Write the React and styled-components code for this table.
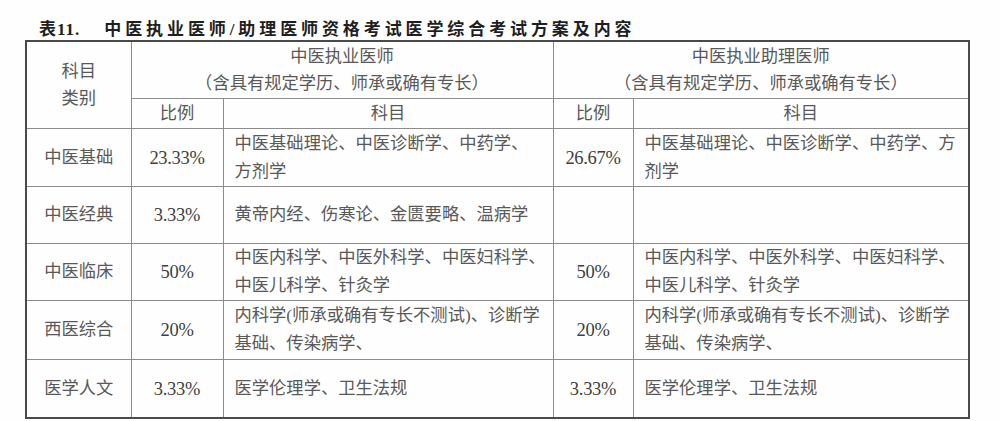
import React from "react"
import styled, { createGlobalStyle } from "styled-components"

const GlobalStyle = createGlobalStyle`
  html, body {
    margin: 0;
    padding: 0;
    background: #ffffff;
  }
`

const Page = styled.div`
  width: 1000px;
  height: 421px;
  overflow: hidden;
  background: #fefefe;
  padding: 20px 0 0 25px;
  box-sizing: border-box;
  font-family: "Liberation Serif", "Noto Sans CJK SC", serif;
`

const Caption = styled.h2`
  margin: 0 0 1px 14px;
  height: 19px;
  line-height: 19px;
  font-family: "Liberation Serif", "Noto Sans CJK SC", sans-serif;
  font-size: 17px;
  font-weight: 700;
  letter-spacing: 3.9px;
  color: #1f1f1f;
  white-space: nowrap;
`

const Num = styled.span`
  letter-spacing: 1px;
  margin-right: 24px;
`

const Table = styled.table`
  border-collapse: collapse;
  table-layout: fixed;
  width: 943px;
  border: 2px solid #4a4a4a;
  color: #595959;
  font-size: 17.3px;
`

const Cell = styled.td`
  border: 1px solid #8c8c8c;
  padding: 0;
  padding-left: ${p => (p.$left ? "11px" : "0")};
  text-align: ${p => (p.$left ? "left" : "center")};
  vertical-align: middle;
  line-height: 28px;
  height: ${p => p.$h || 56}px;
  font-weight: 400;
  white-space: nowrap;
`

const Rate = styled(Cell)`
  font-size: 18.5px;
  letter-spacing: -0.3px;
  color: #3f3f3f;
`

const Head = styled(Cell).attrs({ as: "th" })`
  font-weight: 400;
  line-height: 27px;
`

const Lines = ({ lines }) =>
  lines.map((l, i) => (
    <React.Fragment key={i}>
      {i > 0 && <br />}
      {l}
    </React.Fragment>
  ))

const rows = [
  ["中医基础", "23.33%", ["中医基础理论、中医诊断学、中药学、", "方剂学"], "26.67%", ["中医基础理论、中医诊断学、中药学、方", "剂学"], 57],
  ["中医经典", "3.33%", ["黄帝内经、伤寒论、金匮要略、温病学"], "", [], 56],
  ["中医临床", "50%", ["中医内科学、中医外科学、中医妇科学、", "中医儿科学、针灸学"], "50%", ["中医内科学、中医外科学、中医妇科学、", "中医儿科学、针灸学"], 56],
  ["西医综合", "20%", ["内科学(师承或确有专长不测试)、诊断学", "基础、传染病学、"], "20%", ["内科学(师承或确有专长不测试)、诊断学", "基础、传染病学、"], 58],
  ["医学人文", "3.33%", ["医学伦理学、卫生法规"], "3.33%", ["医学伦理学、卫生法规"], 57],
]

export default function App() {
  return (
    <Page>
      <GlobalStyle />
      <Caption>
        <Num>表11.</Num>中医执业医师/助理医师资格考试医学综合考试方案及内容
      </Caption>
      <Table>
        <colgroup>
          <col style={{ width: 105 }} />
          <col style={{ width: 92 }} />
          <col style={{ width: 330 }} />
          <col style={{ width: 80 }} />
          <col style={{ width: 336 }} />
        </colgroup>
        <thead>
          <tr>
            <Head rowSpan={2} $h={56}>
              科目<br />类别
            </Head>
            <Head colSpan={2} $h={56}>
              中医执业医师<br />（含具有规定学历、师承或确有专长）
            </Head>
            <Head colSpan={2} $h={56}>
              中医执业助理医师<br />（含具有规定学历、师承或确有专长）
            </Head>
          </tr>
          <tr>
            <Head $h={29}>比例</Head>
            <Head $h={29}>科目</Head>
            <Head $h={29}>比例</Head>
            <Head $h={29}>科目</Head>
          </tr>
        </thead>
        <tbody>
          {rows.map(r => (
            <tr key={r[0]}>
              <Cell $h={r[5]}>{r[0]}</Cell>
              <Rate $h={r[5]}>{r[1]}</Rate>
              <Cell $h={r[5]} $left><Lines lines={r[2]} /></Cell>
              <Rate $h={r[5]}>{r[3]}</Rate>
              <Cell $h={r[5]} $left><Lines lines={r[4]} /></Cell>
            </tr>
          ))}
        </tbody>
      </Table>
    </Page>
  )
}
